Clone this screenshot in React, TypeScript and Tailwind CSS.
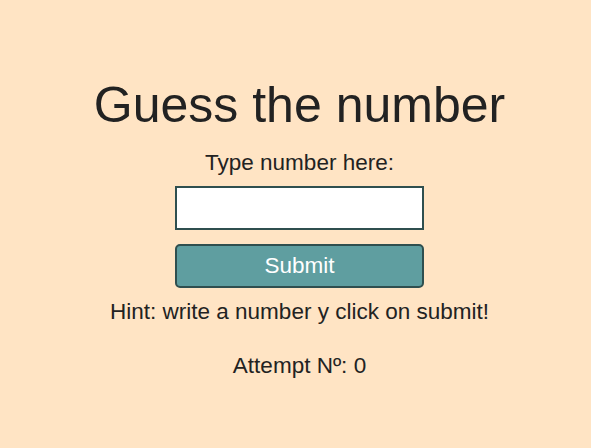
import React, { useState } from "react";

const App: React.FC = () => {
  const [value, setValue] = useState("");
  const [attempts, setAttempts] = useState(0);

  return (
    <div className="min-h-screen w-full bg-[#ffe4c4] text-[#222] font-['Liberation_Sans',Arial,sans-serif]">
      <div className="flex flex-col items-center pt-[76px] pl-[8px]">
        <h1 className="text-[50px] leading-[58px]">Guess the number</h1>
        <p className="mt-[16px] text-[22.5px] leading-[26px]">Type number here:</p>
        <input
          type="text"
          value={value}
          onChange={(e) => setValue(e.target.value)}
          className="mt-[10px] w-[249px] h-[44px] bg-white border-2 border-[#2f4f4f] px-2 text-[22.5px] outline-none"
        />
        <button
          onClick={() => setAttempts(attempts + 1)}
          className="mt-[14px] w-[249px] h-[44px] rounded-[5px] bg-[#5f9ea0] border-2 border-[#2f4f4f] text-white text-[22.5px]"
        >
          Submit
        </button>
        <p className="mt-[11px] text-[22.5px] leading-[26px]">
          Hint: write a number y click on submit!
        </p>
        <p className="mt-[28px] text-[22.5px] leading-[26px]">Attempt Nº: {attempts}</p>
      </div>
    </div>
  );
};

export default App;
